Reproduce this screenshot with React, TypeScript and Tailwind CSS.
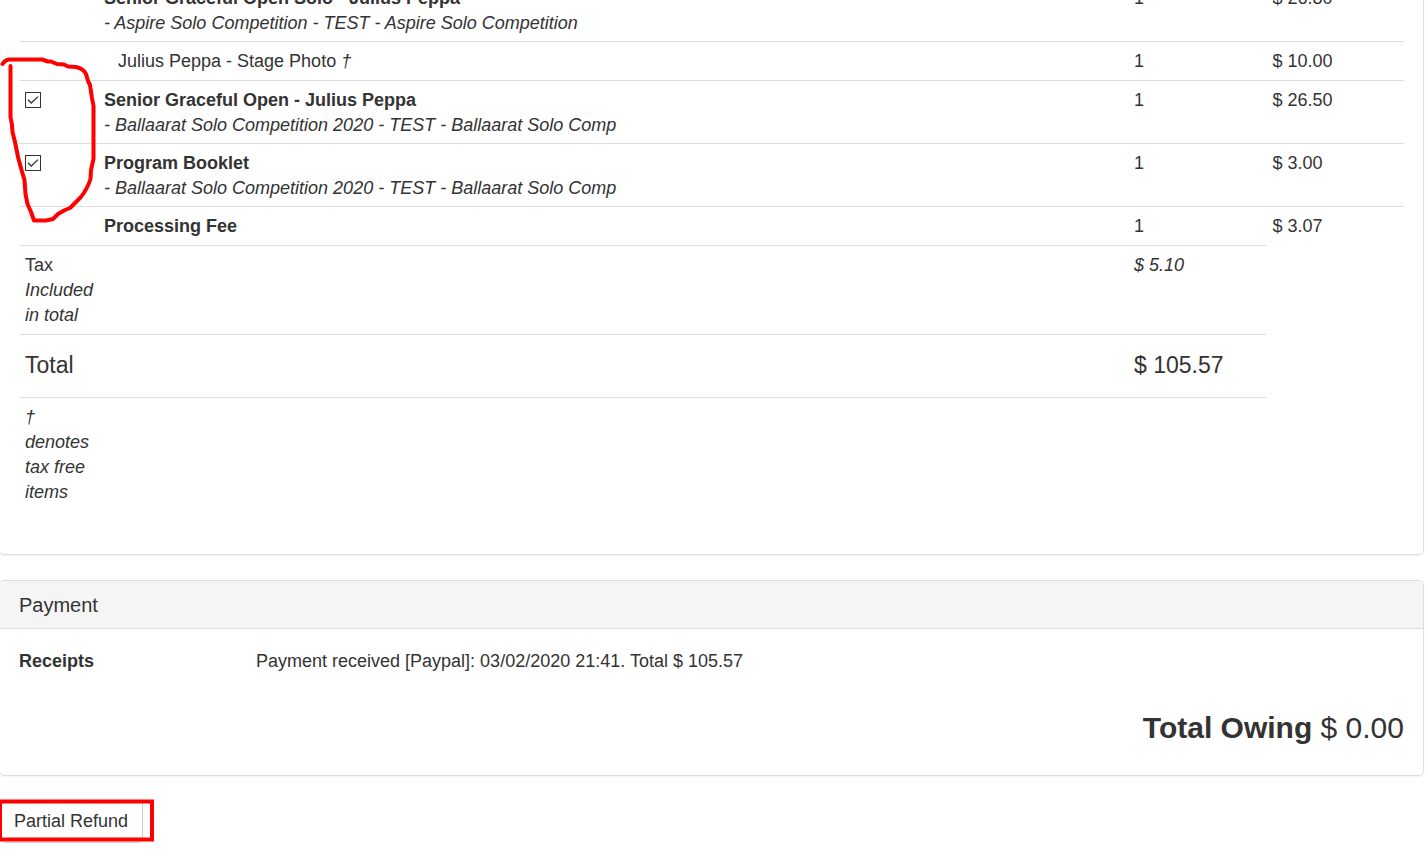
import { useState } from "react";

type Item = {
  name: string;
  detail?: string;
  qty: number;
  price: string;
  selectable?: boolean;
  addOn?: boolean;
};

const items: Item[] = [
  {
    name: "Senior Graceful Open Solo - Julius Peppa",
    detail: "- Aspire Solo Competition - TEST - Aspire Solo Competition",
    qty: 1,
    price: "$ 26.80",
  },
  { name: "Julius Peppa - Stage Photo", qty: 1, price: "$ 10.00", addOn: true },
  {
    name: "Senior Graceful Open - Julius Peppa",
    detail: "- Ballaarat Solo Competition 2020 - TEST - Ballaarat Solo Comp",
    qty: 1,
    price: "$ 26.50",
    selectable: true,
  },
  {
    name: "Program Booklet",
    detail: "- Ballaarat Solo Competition 2020 - TEST - Ballaarat Solo Comp",
    qty: 1,
    price: "$ 3.00",
    selectable: true,
  },
  { name: "Processing Fee", qty: 1, price: "$ 3.07" },
];

function RefundCheckbox({ label }: { label: string }) {
  const [checked, setChecked] = useState(true);
  return (
    <span className="mt-1 grid size-4">
      <input
        type="checkbox"
        aria-label={label}
        checked={checked}
        onChange={(e) => setChecked(e.target.checked)}
        className="col-start-1 row-start-1 size-4 appearance-none border border-[#333] bg-white"
      />
      {checked && (
        <svg viewBox="0 0 16 16" className="pointer-events-none col-start-1 row-start-1 size-4" fill="none" stroke="#333" strokeWidth="1.3">
          <path d="M3 7.8 L6.2 11 L13 4.6" />
        </svg>
      )}
    </span>
  );
}

function ItemRow({ item }: { item: Item }) {
  const pad = item.detail ? "border-t border-[#ddd] pt-[7px] pb-[5px]" : "border-t border-[#ddd] pt-[7px] pb-1.5";
  return (
    <tr className="align-top">
      <td className={`${pad} px-1.5`}>{item.selectable && <RefundCheckbox label={item.name} />}</td>
      <td className={`${pad} px-1.5`}>
        {item.addOn ? (
          <span className="pl-3.5">
            {item.name} <i>†</i>
          </span>
        ) : (
          <b>{item.name}</b>
        )}
        {item.detail && <i className="block">{item.detail}</i>}
      </td>
      <td className={`${pad} px-[7px]`}>{item.qty}</td>
      <td className={`${pad} px-[7px]`}>{item.price}</td>
    </tr>
  );
}

export default function App() {
  return (
    <main className="relative flow-root overflow-hidden bg-white pb-2 font-['Liberation_Sans',Arial,sans-serif] text-[18px] leading-[25px] text-[#333]">
      <section className="-mt-[22px] mr-px -ml-px rounded-[5px] border border-t-0 border-[#ddd] px-[19px] pb-[19px] shadow-[0_1px_1px_rgba(0,0,0,0.05)]">
        <table className="mb-[25px] w-full table-fixed border-separate border-spacing-0 text-left">
          <colgroup>
            <col className="w-[79px]" />
            <col />
            <col className="w-[10%]" />
            <col className="w-[10%]" />
          </colgroup>
          <tbody>
            {items.map((item) => (
              <ItemRow key={item.name} item={item} />
            ))}
            <tr className="align-top">
              <td className="border-t border-[#ddd] px-1.5 pt-[7px] pb-1.5">
                Tax <i className="block">Included in total</i>
              </td>
              <td className="border-t border-[#ddd]" />
              <td className="border-t border-[#ddd] px-[7px] pt-[7px] pb-1.5 italic">$ 5.10</td>
            </tr>
            <tr className="text-[23px]">
              <td className="border-t border-[#ddd] px-1.5 pt-[18px] pb-[19px]">Total</td>
              <td className="border-t border-[#ddd]" />
              <td className="border-t border-[#ddd] px-[7px] pt-[18px] pb-[19px]">$ 105.57</td>
            </tr>
            <tr className="align-top">
              <td className="border-t border-[#ddd] px-1.5 pt-[7px] pb-[5px] italic">† denotes tax free items</td>
              <td className="border-t border-[#ddd]" />
              <td className="border-t border-[#ddd]" />
            </tr>
          </tbody>
        </table>
      </section>

      <section className="mt-[25px] mr-px -ml-px overflow-hidden rounded-[5px] border border-[#ddd] shadow-[0_1px_1px_rgba(0,0,0,0.05)]">
        <h3 className="border-b border-[#ddd] bg-[#f5f5f5] px-[19px] pt-[13px] pb-[11px] text-[20px] leading-[23px]">Payment</h3>
        <div className="px-[19px] pt-5 pb-[31px]">
          <dl className="flex">
            <dt className="w-[237px] font-bold">Receipts</dt>
            <dd>Payment received [Paypal]: 03/02/2020 21:41. Total $ 105.57</dd>
          </dl>
          <p className="mt-[37px] text-right text-[30px] leading-[33px]">
            <b>Total Owing</b> $ 0.00
          </p>
        </div>
      </section>

      <button
        type="button"
        className="mt-6 block rounded-[5px] border border-l-0 border-[#ccc] bg-white px-3.5 py-2"
      >
        Partial Refund
      </button>

      <svg className="pointer-events-none absolute top-0 left-0 h-[850px] w-40" viewBox="0 0 160 850" fill="none" stroke="#f00" strokeWidth="4" strokeLinecap="round" strokeLinejoin="round">
        <path d="M2.5 64 Q5 60 9 59.5 L42 59.5 L48 61.5 L51 61.5 L57 64 L64 64.5 L68 66.5 L76 67 Q84 69 86 74 L88 81 L90 85 L92 98 L93.5 106 L93.5 159 L91 170 L90.5 179 Q87 190 80 198 L70 208 L65 210 L58 214 L53 219 L46 220.5 L34 220.5 L31 212 L27.5 204 L25.5 194 L24.5 180 L21.5 170 L18 157 L15 142 L12.5 132 L12 125 L10.5 117 L10.5 66" />
        <path strokeLinejoin="miter" d="M0 801.5 H152 V839.5 H0 Z" />
      </svg>
    </main>
  );
}
